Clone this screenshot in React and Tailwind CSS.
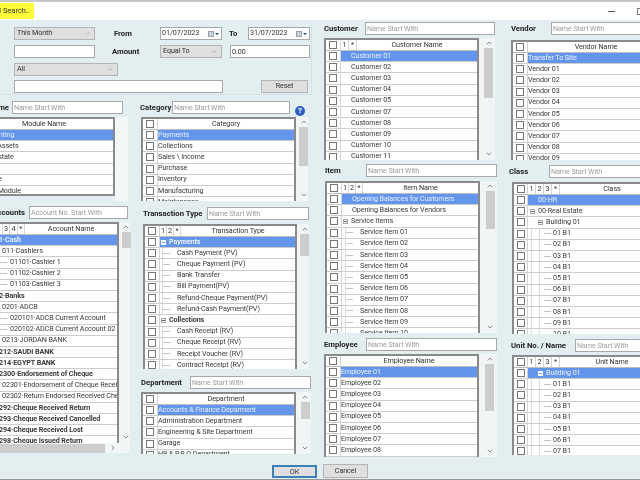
import { ChevronDown, ChevronUp, ChevronRight } from 'lucide-react'

const num = (prefix, from, to) => {
  const out = []
  for (let i = from; i <= to; i++) out.push(prefix + String(i).padStart(2, '0'))
  return out
}

const plain = (t, pad = 'pl-0', bold = false) => ({ t, pad, bold, kind: 'plain' })
const exp = (t, pad, bold = false) => ({ t, pad, bold, kind: 'exp' })
const leaf = (t, pad, gap, guides = []) => ({ t, pad, gap, guides, kind: 'leaf' })

const moduleRows = ['Accounting', 'Fixed Assets', 'Real Estate', 'Sales', 'Service', 'Other Module'].map((t) => plain(t, 'pl-[4px]'))
const categoryRows = ['Payments', 'Collections', 'Sales \\ Income', 'Purchase', 'Inventory', 'Manufacturing', 'Maintenance'].map((t) => plain(t))

const accountLeaf = (t) => leaf(t, 'pl-[12px]', 'mr-[3px]')
const accountRows = [
  plain('01·Cash', 'pl-[7px]', true),
  plain('011·Cashiers', 'pl-[14px]'),
  accountLeaf('01101·Cashier 1'),
  accountLeaf('01102·Cashier 2'),
  accountLeaf('01103·Cashier 3'),
  plain('02·Banks', 'pl-[7px]', true),
  plain('0201·ADCB', 'pl-[14px]'),
  accountLeaf('020101·ADCB Current Account'),
  accountLeaf('020102·ADCB Current Account 02'),
  plain('0213·JORDAN BANK', 'pl-[14px]'),
  plain('0212·SAUDI BANK', 'pl-[7px]', true),
  plain('0214·EGYPT BANK', 'pl-[7px]', true),
  plain('02300·Endorsement of Cheque', 'pl-[7px]', true),
  plain('02301·Endorsement of Cheque Received', 'pl-[14px]'),
  plain('02302·Return Endorsed Received Cheque', 'pl-[14px]'),
  plain('0292·Cheque Received Return', 'pl-[7px]', true),
  plain('0293·Cheque Received Cancelled', 'pl-[7px]', true),
  plain('0294·Cheque Received Lost', 'pl-[7px]', true),
  plain('0298·Cheque Issued Return', 'pl-[7px]', true),
]

const transLeaf = (t) => leaf(t, 'pl-[3px]', 'mr-[7px]', ['left-[2px]'])
const transRows = [
  exp('Payments', 'pl-px', true),
  ...['Cash Payment (PV)', 'Cheque Payment (PV)', 'Bank Transfer', 'Bill Payment(PV)', 'Refund-Cheque Payment(PV)', 'Refund-Cash Payment(PV)'].map(transLeaf),
  exp('Collections', 'pl-px', true),
  ...['Cash Receipt (RV)', 'Cheque Receipt (RV)', 'Receipt Voucher (RV)', 'Contract Receipt (RV)'].map(transLeaf),
]

const departmentRows = ['Accounts & Finance Deparment', 'Administration Department', 'Engineering & Site Department', 'Garage', 'HR & P.R.O Department'].map((t) => plain(t))

const customerRows = ['01', '02', '03', '04', '05', '07', '08', '09', '10', '11'].map((n) => plain('Customer ' + n, 'pl-[10px]'))
const vendorRows = ['Transfer To Site', ...num('Vendor ', 1, 9)].map((t) => plain(t))

const itemRows = [
  plain('Opening Balances for Customers', 'pl-[10px]'),
  plain('Opening Balances for Vendors', 'pl-[10px]'),
  exp('Service Items', 'pl-px'),
  ...num('Service Item ', 1, 10).map((t) => leaf(t, 'pl-[4px]', 'mr-[7px]', ['left-[3px]'])),
]

const unitLeaf = (n) => leaf(n + ' B1', 'pl-[16px]', 'mr-[2px]', ['left-[3px]', 'left-[11px]'])

const classRows = [
  plain('00·HR', 'pl-[10px]'),
  exp('00·Real Estate', 'pl-[2px]'),
  exp('Building 01', 'pl-[10px]'),
  ...['01', '02', '03', '04', '05', '06', '07', '08', '09', '10'].map(unitLeaf),
]

const employeeRows = [...num('Employee ', 1, 9)].map((t) => plain(t))

const unitRows = [
  exp('Building 01', 'pl-[10px]'),
  ...['01', '02', '03', '04', '05', '06', '07', '08'].map(unitLeaf),
]

const small = 'text-[7.2px] tracking-[-0.1px]'

function TextBox({ className = '', placeholder = 'Name Start With', value }) {
  return (
    <input
      readOnly
      value={value}
      placeholder={placeholder}
      className={`h-[13px] bg-white border border-[#a8a8a8] px-px text-[7.2px] tracking-[-0.1px] text-[#333] outline-none placeholder:text-[#9c9c9c] ${className}`}
    />
  )
}

function Combo({ label, className = '' }) {
  return (
    <div className={`h-[13px] flex items-center justify-between bg-[#dfdfdf] border border-[#b4b4b4] pl-[2px] pr-[3px] text-[#333] ${small} ${className}`}>
      <span>{label}</span>
      <ChevronDown size={7} strokeWidth={1.5} className="text-[#777]" />
    </div>
  )
}

function DateBox({ value }) {
  return (
    <div className={`w-[62px] h-[13px] flex items-center justify-between bg-white border border-[#a8a8a8] pl-px pr-[2px] text-[#333] ${small}`}>
      <span>{value}</span>
      <span className="flex items-center gap-[1px]">
        <span className="w-[6px] h-[6px] bg-[#c9ced4] border border-[#9aa0a6]" />
        <span className="w-0 h-0 border-x-[2px] border-x-transparent border-t-[2px] border-t-[#1f3f7a]" />
      </span>
    </div>
  )
}

function Check() {
  return <span className="block w-[8px] h-[8px] bg-white border border-[#777]" />
}

function Expander({ light }) {
  return (
    <span className={`shrink-0 w-[5px] h-[5px] mr-[3px] flex items-center justify-center border ${light ? 'border-white bg-white' : 'border-[#a5a5a5] bg-white'}`}>
      <span className={`block w-[3px] h-px ${light ? 'bg-[#6495ed]' : 'bg-[#666]'}`} />
    </span>
  )
}

function ListRow({ row, selected, checkW }) {
  return (
    <div className="flex h-[11.2px] border-b border-[#cdcdcd]">
      <div className={`shrink-0 flex items-center justify-center border-r border-[#d5d5d5] ${checkW}`}>
        <Check />
      </div>
      <div className={`relative flex-1 min-w-0 flex items-center whitespace-nowrap overflow-hidden ${row.pad} ${selected ? 'bg-[#6495ed] text-[#e8f0ff]' : 'text-[#3a3a3a]'} ${row.bold ? 'font-bold' : ''}`}>
        {row.guides && row.guides.map((g) => (
          <span key={g} className={`absolute inset-y-0 w-px bg-[#dcdcdc] ${g}`} />
        ))}
        {row.kind === 'exp' && <Expander light={selected} />}
        {row.kind === 'leaf' && <span className={`shrink-0 w-[7px] h-px bg-[#c4c4c4] ${row.gap}`} />}
        <span>{row.t}</span>
      </div>
    </div>
  )
}

function Scroll({ thumb, className = '' }) {
  return (
    <div className={`shrink-0 flex flex-col items-center pl-[3px] bg-[#f1f5f6] text-[#555] ${className}`}>
      <ChevronUp size={8} strokeWidth={2} className="my-[1px] shrink-0" />
      <div className={`w-[9px] bg-[#cdcdcd] ${thumb}`} />
      <ChevronDown size={8} strokeWidth={2} className="mt-auto mb-[2px] shrink-0" />
    </div>
  )
}

function Grid({ title, cols = [], rows, checkW = 'w-[15px]', colW = 'w-[7px]', height, width, thumb, scrollW = 'w-[14px]', gridW = '', blank }) {
  return (
    <div className={`flex ${width} ${height}`}>
      <div className={`min-w-0 bg-white border-2 border-[#8a8a8a] border-b-0 overflow-hidden ${small} ${gridW || 'flex-1'}`}>
        <div className="flex h-[11px] border-b border-[#bdbdbd] text-[#333]">
          <div className={`shrink-0 flex items-center justify-center border-r border-[#d5d5d5] ${checkW}`}>
            <Check />
          </div>
          {cols.map((c) => (
            <div key={c} className={`shrink-0 text-center leading-[10px] border-r border-[#d5d5d5] ${colW}`}>{c}</div>
          ))}
          <div className="flex-1 text-center leading-[10px] whitespace-nowrap">{title}</div>
        </div>
        {rows.map((r, i) => (
          <ListRow key={i} row={r} selected={i === 0} checkW={checkW} />
        ))}
      </div>
      {thumb && <Scroll thumb={thumb} className={scrollW} />}
      {blank && <div className={`shrink-0 bg-[#f4f7f8] ${scrollW}`} />}
    </div>
  )
}

function Label({ children, className = '' }) {
  return <span className={`font-bold text-[7.7px] text-[#222] whitespace-nowrap ${className}`}>{children}</span>
}

export default function App() {
  return (
    <div className="w-[640px] h-[480px] overflow-hidden flex flex-col bg-[#e3eef1] font-['Roboto',sans-serif] blur-[0.3px]">
      {/* title bar */}
      <div className="shrink-0 h-[20px] bg-white border-t-2 border-[#c6c6c6] flex items-center justify-between overflow-hidden">
        <span className="-ml-[34px] h-[16px] pl-[2px] pr-[4px] bg-[#fdfd3c] text-[7.5px] leading-[16px] text-[#333] whitespace-nowrap">Advanced Search..</span>
        <div className="flex items-center -mr-[4px]">
          <span className="w-[7px] h-px bg-[#555] mr-[22px]" />
          <span className="w-[7px] h-[7px] border border-[#777]" />
        </div>
      </div>

      <div className="h-[438px] flex">
        {/* left group */}
        <div className="w-[312px] shrink-0 flex flex-col">
          <div className="mt-[2px] h-[73px] pt-[5px] pl-[14px] border-r border-b border-[#d5e3e7] flex flex-col">
            <div className="flex items-center h-[13px]">
              <Combo label="This Month" className="w-[81px]" />
              <Label className="ml-[19px] w-[46px]">From</Label>
              <DateBox value="01/07/2023" />
              <Label className="ml-[7px] w-[19px]">To</Label>
              <DateBox value="31/07/2023" />
            </div>
            <div className="flex items-center h-[13px] mt-[5px]">
              <TextBox className="w-[81px]" placeholder="" />
              <Label className="ml-[17px] w-[48px]">Amount</Label>
              <Combo label="Equal To" className="w-[62px]" />
              <TextBox className="ml-[8px] w-[80px]" value="0.00" />
            </div>
            <div className="flex items-center h-[13px] mt-[5px]">
              <Combo label="All" className="w-[104px]" />
            </div>
            <div className="flex items-center h-[13px] mt-[4px]">
              <TextBox className="w-[209px]" placeholder="" />
              <button className={`ml-[38px] w-[47px] h-[13px] bg-[#dfdfdf] border border-[#b4b4b4] text-[#333] ${small}`}>Reset</button>
            </div>
          </div>

          <div className="flex mt-[6px] -ml-[42px]">
            <div className="w-[172px] shrink-0 flex flex-col">
              <div className="flex items-center justify-end pr-[7px] gap-[3px]">
                <Label>Module Name</Label>
                <TextBox className="w-[111px]" />
              </div>
              <div className="mt-[3px]">
                <Grid title="Module Name" rows={moduleRows} width="w-[172px]" height="h-[84px]" gridW="w-[157px] h-[79px] !border-b-2" blank scrollW="w-[13px]" />
              </div>
              <div className="flex items-center justify-end pr-[2px] gap-[4px] mt-[5px]">
                <Label>Chart of Accounts</Label>
                <TextBox className="w-[99px]" placeholder="Account No. Start With" />
              </div>
              <div className="mt-[3px]">
                <Grid title="Account Name" cols={['1', '2', '3', '4', '*']} colW="w-[7.4px]" checkW="w-[28px]" rows={accountRows} width="w-[172px]" height="h-[221px]" thumb="h-[16px]" scrollW="w-[11px]" />
              </div>
              <div className="h-[10px] flex items-center bg-[#f1f5f6] text-[#555]">
                <div className="w-[147px] h-[9px] bg-[#cdcdcd]" />
                <ChevronRight size={8} strokeWidth={2} className="ml-[4px]" />
              </div>
            </div>

            <div className="w-[170px] shrink-0 ml-[11px] flex flex-col">
              <div className="flex items-center">
                <Label className="w-[32px] -ml-[1px]">Category</Label>
                <TextBox className="w-[118px]" />
                <span className="ml-[5px] mt-[3px] -mb-[3px] w-[10px] h-[10px] rounded-full bg-[#2f5fc4] text-white text-[8px] font-bold leading-[10px] text-center">?</span>
              </div>
              <div className="mt-[3px]">
                <Grid title="Category" rows={categoryRows} width="w-[167px]" height="h-[84px]" thumb="h-[39px]" scrollW="w-[12px]" />
              </div>
              <div className="flex items-center justify-between mt-[6px] pl-[2px]">
                <Label>Transaction Type</Label>
                <TextBox className="w-[102px] mr-[2px]" />
              </div>
              <div className="mt-[4px] ml-[2px]">
                <Grid title="Transaction Type" cols={['1', '2', '*']} rows={transRows} width="w-[166px]" height="h-[145px]" thumb="h-[22px]" scrollW="w-[12px]" />
              </div>
              <div className="flex items-center justify-between mt-[7px]">
                <Label>Department</Label>
                <TextBox className="w-[121px]" />
              </div>
              <div className="mt-[3px]">
                <Grid title="Department" rows={departmentRows} width="w-[170px]" height="h-[62px]" thumb="h-[17px]" scrollW="w-[15px]" />
              </div>
            </div>
          </div>
        </div>

        {/* customer / item / employee */}
        <div className="w-[173px] shrink-0 ml-[12px] mt-[2px] flex flex-col">
          <div className="flex items-center justify-between pr-[2px]">
            <Label>Customer</Label>
            <TextBox className="w-[130px]" />
          </div>
          <div className="mt-[3px]">
            <Grid title="Customer Name" cols={['1', '*']} colW="w-[8px]" rows={customerRows} width="w-[171px]" height="h-[122px]" thumb="h-[50px]" scrollW="w-[16px]" />
          </div>
          <div className="flex items-center justify-between mt-[4px] pl-px">
            <Label>Item</Label>
            <TextBox className="w-[131px]" />
          </div>
          <div className="mt-[4px] ml-px">
            <Grid title="Item Name" cols={['1', '2', '*']} rows={itemRows} width="w-[172px]" height="h-[152px]" thumb="h-[38px]" scrollW="w-[17px]" />
          </div>
          <div className="flex items-center justify-between mt-[5px]">
            <Label>Employee</Label>
            <TextBox className="w-[131px]" />
          </div>
          <div className="mt-[3px]">
            <Grid title="Employee Name" rows={employeeRows} width="w-[173px]" height="h-[103px]" thumb="h-[47px]" scrollW="w-[18px]" />
          </div>
        </div>

        {/* vendor / class / unit */}
        <div className="w-[155px] shrink-0 ml-[14px] mt-[2px] flex flex-col">
          <div className="flex items-center">
            <Label className="w-[40px]">Vendor</Label>
            <TextBox className="w-[110px]" />
          </div>
          <div className="mt-[5px]">
            <Grid title="Vendor Name" rows={vendorRows} width="w-[155px]" height="h-[120px]" />
          </div>
          <div className="flex items-center mt-[5px]">
            <Label className="w-[40px] -ml-[2px]">Class</Label>
            <TextBox className="w-[110px]" />
          </div>
          <div className="mt-[4px] ml-px">
            <Grid title="Class" cols={['1', '2', '3', '*']} colW="w-[8px]" checkW="w-[14px]" rows={classRows} width="w-[154px]" height="h-[152px]" />
          </div>
          <div className="flex items-center mt-[5px]">
            <Label className="w-[64px]">Unit No. / Name</Label>
            <TextBox className="w-[90px]" />
          </div>
          <div className="mt-[3px] ml-px">
            <Grid title="Unit Name" cols={['1', '2', '3', '*']} colW="w-[8px]" checkW="w-[14px]" rows={unitRows} width="w-[154px]" height="h-[100px]" />
          </div>
        </div>
      </div>

      {/* footer */}
      <div className="flex-1 flex justify-center items-start gap-[6px] pt-[6px] border-b border-[#9a9a9a]">
        <button className={`w-[45px] h-[13px] mt-px bg-[#dfdfdf] border-2 border-[#3f7fb8] leading-[9px] text-[#333] ${small}`}>OK</button>
        <button className={`w-[45px] h-[14px] bg-[#dfdfdf] border border-[#b4b4b4] text-[#333] ${small}`}>Cancel</button>
      </div>
    </div>
  )
}
